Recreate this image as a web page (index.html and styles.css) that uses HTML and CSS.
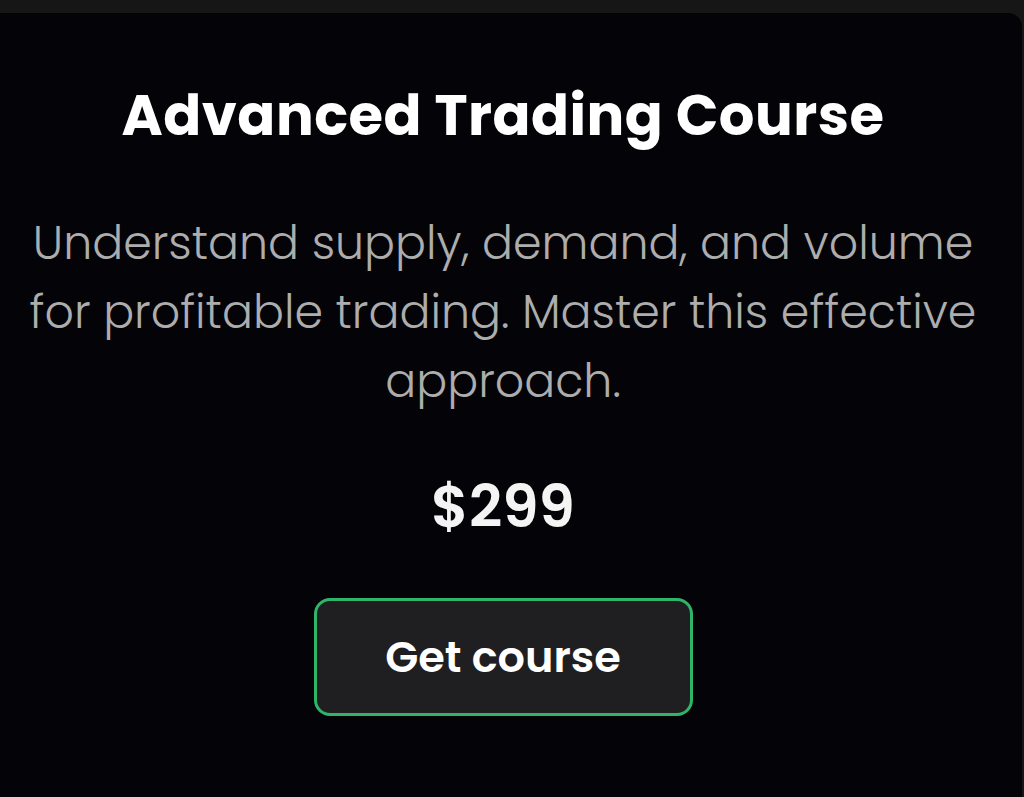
FILE: index.html
```html
<!DOCTYPE html>
<html lang="en">
<head>
  <meta charset="UTF-8">
  <meta name="viewport" content="width=device-width, initial-scale=1.0">
  <title>Advanced Trading Course</title>
  <link rel="stylesheet" href="styles.css">
</head>
<body>
  <!-- Course card -->
  <section class="course-card">
    <h2 class="course-title">Advanced Trading Course</h2>
    <p class="course-desc">Understand supply, demand, and volume for profitable trading. Master this effective approach.</p>
    <p class="course-price">$299</p>
    <a class="course-btn" href="#">Get course</a>
  </section>
</body>
</html>
```

FILE: styles.css
```css
* {
  margin: 0;
  padding: 0;
  box-sizing: border-box;
}

body {
  font-family: 'Poppins', 'Open Sans', sans-serif;
  background-color: #161616;
  color: #fff;
  padding-top: 13px;
  min-height: 797px;
  overflow: hidden;
}

.course-card {
  display: flex;
  flex-direction: column;
  align-items: center;
  margin: 0 2px 0 -16px;
  min-height: 784px;
  padding: 69px 40px 0;
  background-color: #040408;
  border-radius: 0 14px 0 0;
  text-align: center;
}

.course-title {
  font-size: 56px;
  font-weight: 700;
  line-height: 1.2;
  letter-spacing: 0.5px;
}

.course-desc {
  margin-top: 60px;
  max-width: 960px;
  font-size: 45.9px;
  font-weight: 300;
  line-height: 69px;
  color: #adadad;
}

.course-price {
  margin-top: 47px;
  font-size: 58px;
  font-weight: 600;
  line-height: 1.5;
  color: #f4f4f4;
}

.course-btn {
  display: flex;
  align-items: center;
  justify-content: center;
  margin-top: 48px;
  width: 379px;
  height: 118px;
  border: 3px solid #2fb56a;
  border-radius: 16px;
  background-color: #1f1f21;
  color: #fff;
  font-size: 43px;
  font-weight: 600;
  text-decoration: none;
}
```
